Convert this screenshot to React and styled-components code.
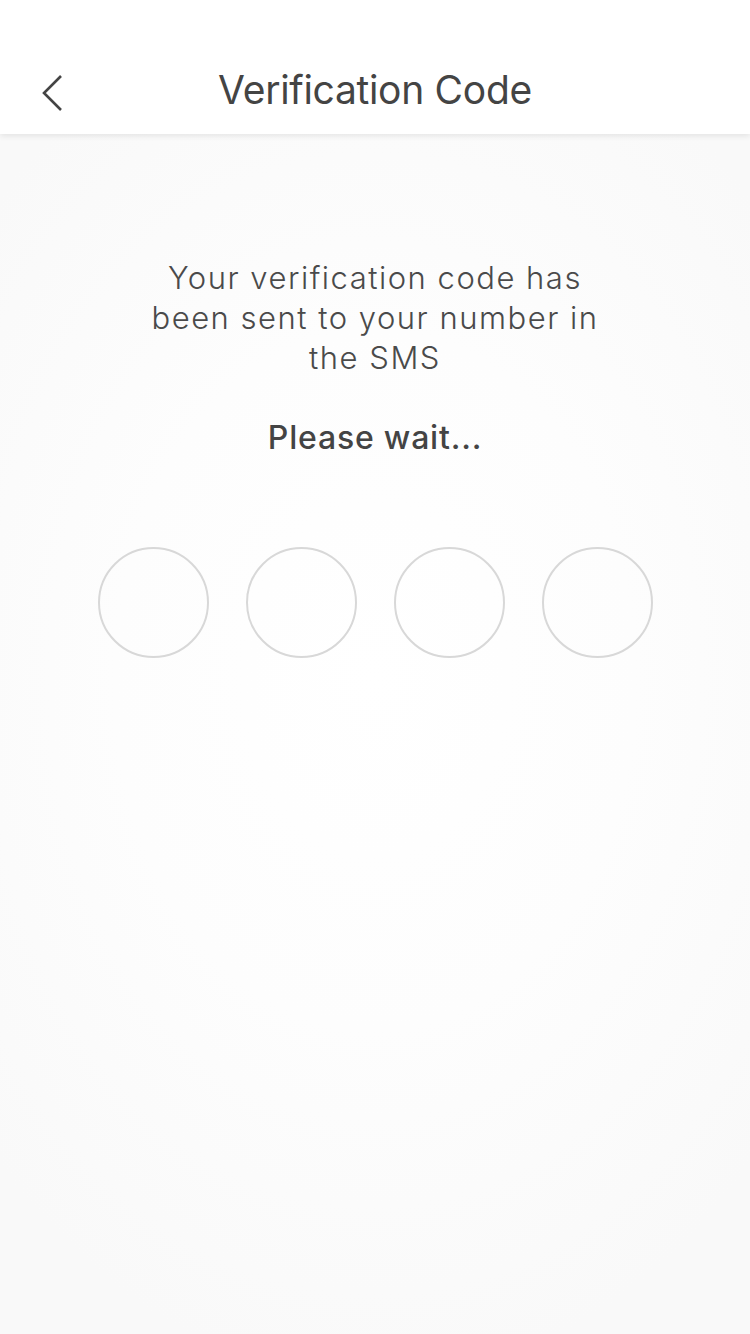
import React from 'react';
import styled, { createGlobalStyle } from 'styled-components';

const GlobalStyle = createGlobalStyle`
  html, body {
    margin: 0;
    padding: 0;
  }
  body {
    font-family: Inter, "Open Sans", sans-serif;
    -webkit-font-smoothing: antialiased;
  }
  * {
    box-sizing: border-box;
  }
`;

const StPage = styled.div`
  width: 750px;
  height: 1334px;
  display: flex;
  flex-direction: column;
  overflow: hidden;
  background: radial-gradient(ellipse 520px 700px at 375px 680px, #ffffff 0%, #fdfdfd 50%, #f9f9f9 100%);
`;

const StHeader = styled.header`
  height: 134px;
  padding-top: 44px;
  background-color: #ffffff;
  box-shadow: 0 2px 6px rgba(0, 0, 0, 0.09);
  display: flex;
  align-items: center;
  justify-content: center;
  position: relative;
  z-index: 1;
`;

const StBack = styled.button`
  position: absolute;
  left: 30px;
  top: 66px;
  width: 44px;
  height: 56px;
  padding: 0;
  border: none;
  background: none;
  display: flex;
  align-items: center;
  justify-content: center;
`;

const StTitle = styled.h1`
  margin: 0;
  font-size: 39px;
  font-weight: 400;
  color: #444444;
  letter-spacing: -0.3px;
`;

const StBody = styled.main`
  flex: 1;
  display: flex;
  flex-direction: column;
  align-items: center;
  padding-top: 124px;
`;

const StMessage = styled.p`
  margin: 0;
  width: 480px;
  text-align: center;
  font-size: 31px;
  line-height: 40px;
  font-weight: 300;
  letter-spacing: 1.5px;
  color: #4a4a4a;
`;

const StWait = styled.p`
  margin: 40px 0 0;
  font-size: 32px;
  line-height: 40px;
  font-weight: 500;
  letter-spacing: 0.8px;
  color: #444444;
`;

const StCodeRow = styled.div`
  display: flex;
  gap: 37px;
  margin-top: 89px;
`;

const StCodeCircle = styled.div`
  width: 111px;
  height: 111px;
  border-radius: 50%;
  border: 2px solid ${props => props.active ? '#aaaaaa' : '#d8d8d8'};
`;

const App = () => {
  const slots = [0, 1, 2, 3];

  return (
    <>
      <GlobalStyle />
      <StPage>
        <StHeader>
          <StBack aria-label="back">
            <svg width="22" height="40" viewBox="0 0 22 40" fill="none">
              <path d="M20 2 L3 19 L20 36" stroke="#444" strokeWidth="2.6" strokeLinecap="butt" strokeLinejoin="miter" />
            </svg>
          </StBack>
          <StTitle>Verification Code</StTitle>
        </StHeader>
        <StBody>
          <StMessage>Your verification code has been sent to your number in the SMS</StMessage>
          <StWait>Please wait...</StWait>
          <StCodeRow>
            {slots.map((i) => (
              <StCodeCircle key={i} />
            ))}
          </StCodeRow>
        </StBody>
      </StPage>
    </>
  );
};

export default App;
